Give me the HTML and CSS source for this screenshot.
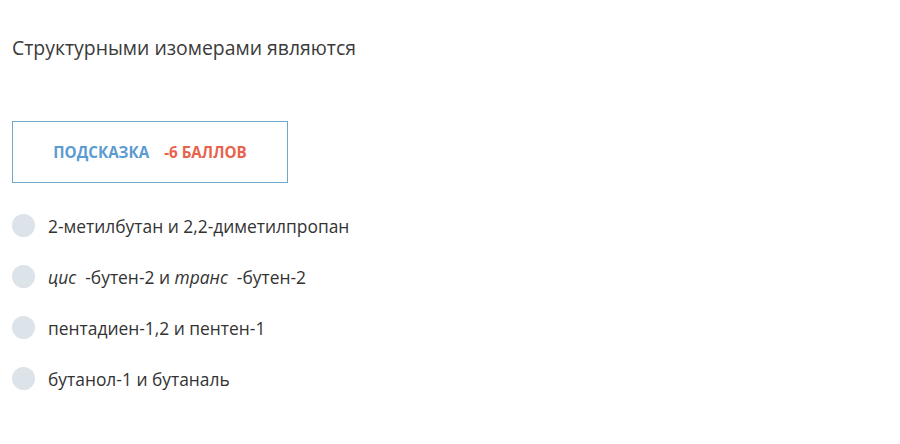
FILE: index.html
```html
<!DOCTYPE html>
<html lang="ru">
<head>
    <meta charset="UTF-8">
    <title>Вопрос</title>
    <link rel="stylesheet" href="styles.css">
</head>
<body>
<div class="question">
    <h2 class="question-title">Структурными изомерами являются</h2>

    <button class="hint-button" type="button">
        <span class="hint-label">Подсказка</span>
        <span class="hint-cost">-6 баллов</span>
    </button>

    <ul class="answers">
        <li class="answer"><span class="radio"></span>2-метилбутан и 2,2-диметилпропан</li>
        <li class="answer"><span class="radio"></span><em>цис</em>&nbsp;&nbsp;-бутен-2 и&nbsp;<em>транс</em>&nbsp;&nbsp;-бутен-2</li>
        <li class="answer"><span class="radio"></span>пентадиен-1,2 и пентен-1</li>
        <li class="answer"><span class="radio"></span>бутанол-1 и бутаналь</li>
    </ul>
</div>
</body>
</html>
```

FILE: styles.css
```css
body {
    margin: 0;
    padding: 0;
    background-color: #FFFFFF;
    color: #333333;
    font-family: "Open Sans", "Noto Sans", sans-serif;
}

.question {
    padding: 12px;
}

.question-title {
    font-size: 19.4px;
    font-weight: normal;
    margin: 24px 0 0 0;
    line-height: 24px;
    color: #3A3A3A;
}

.hint-button {
    display: flex;
    justify-content: center;
    align-items: center;
    gap: 15px;
    width: 276px;
    height: 62px;
    margin-top: 61px;
    padding: 0;
    background-color: #FFFFFF;
    border: 1px solid #6FA8C8;
    font-family: inherit;
    font-size: 15.2px;
    font-weight: bold;
    text-transform: uppercase;
    cursor: pointer;
}

.hint-label {
    color: #5B9BD1;
}

.hint-cost {
    color: #E8624D;
}

.answers {
    list-style: none;
    margin: 17px 0 0 0;
    padding: 0;
}

.answer {
    display: flex;
    align-items: center;
    height: 51px;
    font-size: 17.4px;
    line-height: 22px;
    color: #333333;
}

.radio {
    width: 23px;
    height: 23px;
    border-radius: 50%;
    background-color: #DCE3E9;
    margin-right: 13px;
    flex-shrink: 0;
}

.answer em {
    font-style: italic;
}
```
